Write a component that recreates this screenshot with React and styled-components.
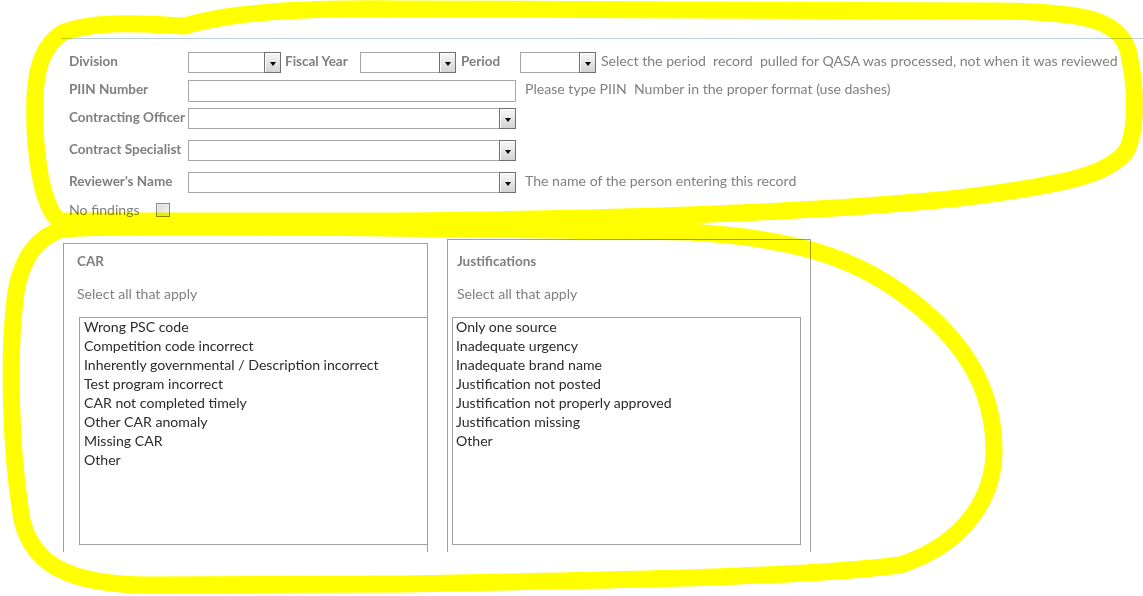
import React from 'react';
import styled, { createGlobalStyle } from 'styled-components';

const Global = createGlobalStyle`
  html, body { margin: 0; padding: 0; background: #fff; }
  body { font-family: Lato, "Liberation Sans", sans-serif; }
`;

const Page = styled.div`
  position: relative;
  width: 1143px;
  height: 596px;
  overflow: hidden;
  background: #fff;
  font-family: Lato, "Open Sans", "Liberation Sans", sans-serif;
  font-size: 14.1px;
  color: #7f7f7f;
`;

const Rule = styled.div`
  margin: 38px 0 0 61px;
  height: 1px;
  background: #b9cde5;
`;

const Form = styled.div`
  display: flex;
  flex-direction: column;
  padding-left: 69px;
`;

const Row = styled.div`
  display: flex;
  align-items: center;
  height: ${p => p.$h || 21}px;
  margin-top: ${p => p.$gap}px;
`;

const Label = styled.div`
  flex: none;
  width: ${p => p.$w || 119}px;
  margin-left: ${p => p.$ml || 0}px;
  padding-bottom: 4px;
  font-size: 13.5px;
  font-weight: 700;
  color: #7f7f7f;
  white-space: nowrap;
`;

const Hint = styled.div`
  margin-left: ${p => p.$ml}px;
  padding-bottom: 4px;
  white-space: pre;
  color: #808080;
`;

const ComboBox = styled.div`
  flex: none;
  display: flex;
  box-sizing: border-box;
  width: ${p => p.$w}px;
  height: 21px;
  border: 1px solid #a6a6a6;
  background: #fff;
`;

const DropButton = styled.div`
  box-sizing: border-box;
  width: 17px;
  height: calc(100% + 2px);
  margin: -1px -1px -1px auto;
  border: 1px solid #6f6f6f;
  box-shadow: inset 1px 1px 0 #fff;
  background: linear-gradient(#f7f7f7, #d4d4d4);
  display: flex;
  align-items: center;
  justify-content: center;
  &::after {
    content: "";
    display: block;
    margin-top: 2px;
    border-left: 3.5px solid transparent;
    border-right: 3.5px solid transparent;
    border-top: 4px solid #000;
  }
`;

const TextBox = styled.div`
  flex: none;
  box-sizing: border-box;
  width: ${p => p.$w}px;
  height: 22px;
  border: 1px solid #a6a6a6;
  background: #fff;
`;

const CheckText = styled.div`
  width: 87px;
  padding-bottom: 2px;
  color: #808080;
`;

const CheckBox = styled.div`
  box-sizing: border-box;
  width: 14px;
  height: 14px;
  border: 1px solid #8a8a8a;
  background: linear-gradient(135deg, #d8d8d8, #f6f6f6);
  box-shadow: inset 0 0 0 1px #eee;
`;

const Panels = styled.div`
  display: flex;
  align-items: stretch;
  height: 313px;
  margin-top: 22px;
  padding-left: 63px;
`;

const Panel = styled.div`
  box-sizing: border-box;
  display: flex;
  flex-direction: column;
  width: ${p => p.$w}px;
  margin-left: ${p => p.$ml || 0}px;
  margin-top: ${p => p.$mt || 0}px;
  border: 1px solid #a0a0a0;
  border-bottom: none;
`;

const PanelTitle = styled.div`
  margin-top: ${p => p.$top}px;
  padding-left: ${p => p.$inset}px;
  line-height: 19px;
  font-size: 13.5px;
  font-weight: 700;
  color: #7f7f7f;
`;

const PanelSub = styled.div`
  margin-top: 13px;
  padding-left: ${p => p.$inset}px;
  line-height: 19px;
  color: #808080;
`;

const ListBox = styled.div`
  box-sizing: border-box;
  height: 228px;
  margin: 14px ${p => p.$mr}px 0 ${p => p.$ml}px;
  padding-top: 0;
  border: 1px solid #a0a0a0;
  background: #fff;
`;

const ListItem = styled.div`
  padding-left: ${p => p.$pl}px;
  line-height: 19px;
  margin-top: -1px;
  margin-bottom: 1px;
  color: #2b2b2b;
  white-space: nowrap;
`;

const Highlight = styled.svg`
  position: absolute;
  left: 0;
  top: 0;
  pointer-events: none;
  mix-blend-mode: multiply;
`;

const Combo = ({ w }) => (
  <ComboBox $w={w}>
    <DropButton />
  </ComboBox>
);

const carItems = [
  'Wrong PSC code',
  'Competition code incorrect',
  'Inherently governmental / Description incorrect',
  'Test program incorrect',
  'CAR not completed timely',
  'Other CAR anomaly',
  'Missing CAR',
  'Other',
];

const justItems = [
  'Only one source',
  'Inadequate urgency',
  'Inadequate brand name',
  'Justification not posted',
  'Justification not properly approved',
  'Justification missing',
  'Other',
];

export default function App() {
  return (
    <Page>
      <Global />
      <Rule />
      <Form>
        <Row $gap={13}>
          <Label>Division</Label>
          <Combo w={93} />
          <Label $ml={4} $w={75}>Fiscal Year</Label>
          <Combo w={96} />
          <Label $ml={5} $w={59}>Period</Label>
          <Combo w={76} />
          <Hint $ml={5}>{'Select the period  record  pulled for QASA was processed, not when it was reviewed'}</Hint>
        </Row>
        <Row $gap={7}>
          <Label>PIIN Number</Label>
          <TextBox $w={328} />
          <Hint $ml={9}>{'Please type PIIN  Number in the proper format (use dashes)'}</Hint>
        </Row>
        <Row $gap={7}>
          <Label>Contracting Officer</Label>
          <Combo w={328} />
        </Row>
        <Row $gap={11}>
          <Label>Contract Specialist</Label>
          <Combo w={328} />
        </Row>
        <Row $gap={11}>
          <Label>Reviewer's Name</Label>
          <Combo w={328} />
          <Hint $ml={9}>The name of the person entering this record</Hint>
        </Row>
        <Row $gap={10} $h={14}>
          <CheckText>No findings</CheckText>
          <CheckBox />
        </Row>
      </Form>
      <Panels>
        <Panel $w={365} $mt={4}>
          <PanelTitle $top={8} $inset={13}>CAR</PanelTitle>
          <PanelSub $inset={13}>Select all that apply</PanelSub>
          <ListBox $ml={15} $mr={-1}>
            {carItems.map(t => <ListItem key={t} $pl={4}>{t}</ListItem>)}
          </ListBox>
        </Panel>
        <Panel $w={364} $ml={19}>
          <PanelTitle $top={12} $inset={9}>Justifications</PanelTitle>
          <PanelSub $inset={9}>Select all that apply</PanelSub>
          <ListBox $ml={4} $mr={9}>
            {justItems.map(t => <ListItem key={t} $pl={3}>{t}</ListItem>)}
          </ListBox>
        </Panel>
      </Panels>
      <Highlight width="1143" height="596" viewBox="0 0 1143 596">
        <g fill="none" stroke="#ffff00" strokeWidth="17" strokeLinejoin="round" strokeLinecap="round">
          <path d="M 62 33 C 95 20, 140 24, 185 26 C 230 12, 300 8, 400 9 L 1000 11 C 1085 12, 1118 20, 1128 50 C 1137 90, 1137 128, 1127 150 C 1110 174, 1070 184, 960 198 C 800 214, 600 219, 400 221 L 60 221 C 42 210, 33 150, 35 95 C 37 62, 45 45, 62 33 Z" />
          <path d="M 62 229 C 100 226, 300 226, 690 232 C 790 238, 850 256, 900 292 C 960 335, 994 385, 994 450 C 994 500, 962 545, 900 565 C 800 578, 600 580, 400 584 L 150 585 C 65 585, 32 562, 22 520 C 10 450, 8 350, 16 292 C 22 258, 36 238, 62 229 Z" />
        </g>
      </Highlight>
    </Page>
  );
}
